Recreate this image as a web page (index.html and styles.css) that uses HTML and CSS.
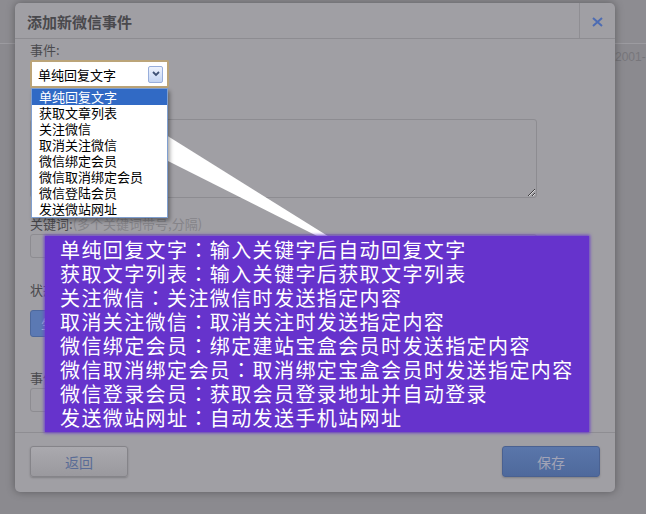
FILE: index.html
```html
<!DOCTYPE html>
<html lang="zh-CN">
<head>
<meta charset="utf-8">
<title>添加新微信事件</title>
<link rel="stylesheet" href="styles.css">
</head>
<body>
<div class="stage">
  <div class="page">
    <div class="page-top"></div>
    <div class="page-date">2001-</div>
  </div>

  <div class="modal">
    <div class="modal-head">
      <h2 class="modal-title">添加新微信事件</h2>
      <div class="modal-close">
        <svg width="11" height="10" viewBox="0 0 11 10"><path d="M1 1 L10 9 M10 1 L1 9" stroke="#4d6cb3" stroke-width="2" fill="none"/></svg>
      </div>
    </div>
    <div class="modal-body">
      <div class="lbl">事件:</div>
      <div class="select">
        <span class="select-text">单纯回复文字</span>
        <span class="select-btn"><svg width="8" height="6" viewBox="0 0 8 6"><path d="M1 1 L4 4 L7 1" stroke="#3f5275" stroke-width="1.8" fill="none"/></svg></span>
      </div>
      <div class="area-gap"></div>
      <textarea class="area"></textarea>
      <div class="lbl gap-key">关键词:<span class="hint">(多个关键词带号,分隔)</span></div>
      <div class="field"></div>
      <div class="lbl gap-state">状态</div>
      <div class="state-btn">生成</div>
      <div class="lbl gap-event">事件</div>
      <div class="field"></div>
    </div>
    <div class="modal-foot">
      <button class="btn btn-back">返回</button>
      <button class="btn btn-save">保存</button>
    </div>

    <ul class="dropdown">
      <li class="on">单纯回复文字</li>
      <li>获取文章列表</li>
      <li>关注微信</li>
      <li>取消关注微信</li>
      <li>微信绑定会员</li>
      <li>微信取消绑定会员</li>
      <li>微信登陆会员</li>
      <li>发送微站网址</li>
    </ul>
  </div>

  <svg class="wedge" width="646" height="514" viewBox="0 0 646 514"><polygon points="158,130 331,238 321,238 158,156" fill="#ffffff"/></svg>

  <div class="note">
    <div>单纯回复文字<span class="colon" lang="zh-TW">：</span>输入关键字后自动回复文字</div>
    <div>获取文字列表<span class="colon" lang="zh-TW">：</span>输入关键字后获取文字列表</div>
    <div>关注微信<span class="colon" lang="zh-TW">：</span>关注微信时发送指定内容</div>
    <div>取消关注微信<span class="colon" lang="zh-TW">：</span>取消关注时发送指定内容</div>
    <div>微信绑定会员<span class="colon" lang="zh-TW">：</span>绑定建站宝盒会员时发送指定内容</div>
    <div>微信取消绑定会员<span class="colon" lang="zh-TW">：</span>取消绑定宝盒会员时发送指定内容</div>
    <div>微信登录会员<span class="colon" lang="zh-TW">：</span>获取会员登录地址并自动登录</div>
    <div>发送微站网址<span class="colon" lang="zh-TW">：</span>自动发送手机站网址</div>
  </div>
</div>
</body>
</html>
```

FILE: styles.css
```css
html, body {
  margin: 0;
  padding: 0;
}
body {
  width: 646px;
  height: 514px;
  overflow: hidden;
  background: #8b8a8f;
  font-family: "Noto Sans CJK SC", "Noto Sans", sans-serif;
}
.stage {
  position: relative;
  width: 646px;
  height: 514px;
}
.page-top {
  height: 43px;
  background: #8d8c91;
  border-bottom: 1px solid #9c9ba0;
}
.page-date {
  margin-top: 6px;
  padding-left: 615px;
  font-family: "Liberation Sans", sans-serif;
  font-size: 12px;
  line-height: 15px;
  color: #77767b;
  white-space: nowrap;
}

.modal {
  position: absolute;
  left: 15px;
  top: 3px;
  width: 600px;
  height: 489px;
  background: #a09fa4;
  border-radius: 5px;
  box-shadow: 0 0 8px rgba(0, 0, 0, 0.35);
  display: flex;
  flex-direction: column;
}
.modal-head {
  height: 36px;
  box-sizing: border-box;
  padding-top: 3px;
  border-bottom: 1px solid #8d8c91;
  display: flex;
  align-items: center;
}
.modal-title {
  flex: 1;
  margin: 0;
  padding-left: 12px;
  font-size: 15px;
  line-height: 20px;
  font-weight: 700;
  color: #4a494d;
}
.modal-close {
  width: 36px;
  align-self: stretch;
  margin-top: -3px;
  padding-top: 3px;
  box-sizing: border-box;
  border-left: 1px solid #8f8e93;
  display: flex;
  align-items: center;
  justify-content: center;
}
.modal-body {
  flex: 1;
  padding: 3px 15px 0;
  display: flex;
  flex-direction: column;
  align-items: flex-start;
}
.lbl {
  font-size: 13px;
  line-height: 16px;
  color: #4b4a4e;
  white-space: nowrap;
}
.hint {
  color: #858489;
}
.select {
  margin-top: 2px;
  width: 139px;
  height: 28px;
  box-sizing: border-box;
  border: 2px solid #bba478;
  border-radius: 2px;
  background: #ffffff;
  display: flex;
  align-items: center;
  padding-left: 6px;
  font-size: 13px;
  color: #000000;
}
.select-text {
  flex: 1;
}
.select-btn {
  width: 15px;
  height: 17px;
  box-sizing: border-box;
  margin-right: 4px;
  border: 1px solid #98aedb;
  border-radius: 2px;
  background: linear-gradient(#eef3fd, #c4d5f3);
  display: flex;
  align-items: center;
  justify-content: center;
}
.area-gap { height: 31px; }
.gap-key { margin-top: 18px; }
.gap-state { margin-top: 24px; }
.gap-event { margin-top: 33px; }
.area {
  margin: 0;
  padding: 0;
  width: 507px;
  height: 79px;
  box-sizing: border-box;
  border: 1px solid #8d8c91;
  border-radius: 3px;
  background: transparent;
}
.field {
  margin-top: 2px;
  width: 507px;
  height: 24px;
  box-sizing: border-box;
  border: 1px solid #8d8c91;
  border-radius: 3px;
}
.state-btn {
  margin-top: 12px;
  height: 27px;
  box-sizing: border-box;
  padding: 0 10px;
  display: flex;
  align-items: center;
  background: #5b79b3;
  border: 1px solid #4d689c;
  border-radius: 3px;
  font-size: 13px;
  color: #a3b4d6;
}
.modal-foot {
  border-top: 1px solid #8e8d92;
  padding: 13px 15px 15px;
  display: flex;
  justify-content: space-between;
}
.btn {
  width: 98px;
  height: 31px;
  box-sizing: border-box;
  margin: 0;
  padding: 0;
  border-radius: 3px;
  font-family: "Noto Sans CJK SC", sans-serif;
  font-size: 14px;
  line-height: 20px;
}
.btn-back {
  background: linear-gradient(#aaa9ae, #9a999e);
  border: 1px solid #858489;
  color: #5a6c96;
  box-shadow: 0 1px 2px rgba(0, 0, 0, 0.2);
}
.btn-save {
  background: linear-gradient(#5a76aa, #4e699c);
  border: 1px solid #4a6191;
  color: #a2a4b6;
  box-shadow: 0 1px 2px rgba(0, 0, 0, 0.2);
}

.dropdown {
  position: absolute;
  left: 16px;
  top: 85px;
  width: 137px;
  box-sizing: border-box;
  margin: 0;
  padding: 0;
  list-style: none;
  background: #ffffff;
  border: 1px solid #7f9fd0;
  box-shadow: 2px 3px 4px rgba(0, 0, 0, 0.35);
  z-index: 3;
}
.dropdown li {
  height: 16px;
  line-height: 16px;
  padding-left: 7px;
  font-size: 13px;
  color: #000000;
  white-space: nowrap;
}
.dropdown li.on {
  background: #316ac5;
  color: #ffffff;
}

.wedge {
  position: absolute;
  left: 0;
  top: 0;
  z-index: 2;
  pointer-events: none;
}
.note {
  position: absolute;
  left: 45px;
  top: 236px;
  width: 544px;
  height: 196px;
  box-sizing: border-box;
  padding: 2px 0 0 15px;
  background: #6633cc;
  box-shadow: 0 0 3px 1px #6a3fc8;
  color: #ffffff;
  font-size: 20px;
  line-height: 24px;
  letter-spacing: 1.4px;
  white-space: nowrap;
  z-index: 4;
}
.colon {
  font-family: "Noto Sans CJK TC", "Noto Sans CJK SC", sans-serif;
}
```
